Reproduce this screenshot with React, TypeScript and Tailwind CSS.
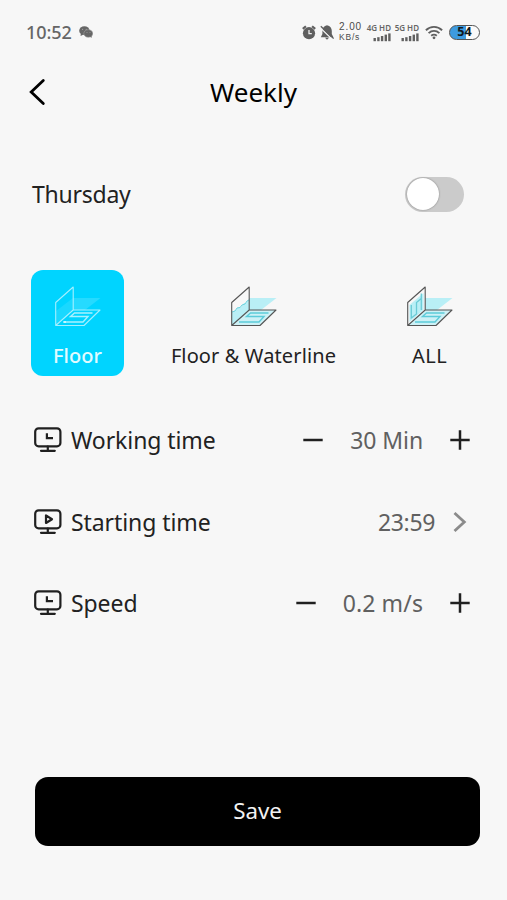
import React, { useState } from "react";

interface PoolIconProps {
  line: string;
  water: string;
  wall?: "waterline" | "full";
  active?: boolean;
}

const PoolIcon: React.FC<PoolIconProps> = ({ line, water, wall, active }) => {
  return (
    <svg width="48" height="42" viewBox="0 0 48 42" fill="none">
      <path
        d="M19 13H46.5L31 25H19Z"
        fill={water}
        opacity={active ? 0.15 : 0.6}
      />
      {active && <path d="M2 26L19 13V25L2 40Z" fill={water} opacity="0.1" />}
      {!active && <path d="M19 25H46L30 40.5H2Z" fill={water} opacity="0.4" />}
      {wall && (
        <path
          d={
            wall === "full"
              ? "M3.5 20L17.5 8V25L3.5 37Z"
              : "M2 27L6 25L8 22L11 22L14 18L16 18L19 14V25L2 40Z"
          }
          fill={water}
          opacity="0.6"
        />
      )}
      {wall === "waterline" && (
        <path
          d="M2 27L5 26L7 23L10 22.5L12 20L15 19L17 16L19 15"
          stroke="#6fd3de"
          strokeWidth="1"
        />
      )}
      {wall === "full" && (
        <path
          d="M5.3 20V33L10.5 29V17.5L15.3 13.5V25M15.3 8.5V13.5"
          stroke="#6acbd6"
          strokeWidth="1.3"
        />
      )}
      <path
        d="M38.5 28H20.5L16.5 31.5H34L29 37H9"
        stroke={active ? "#a9f1ff" : "#5ccbd9"}
        strokeWidth="1.4"
      />
      {active && <circle cx="11" cy="37" r="1.1" fill="#d8faff" />}
      <path
        d="M1.7 17.5L19.2 2V25L1.7 40.5ZM19.2 25H46L30 40.5H1.7"
        stroke={line}
        strokeWidth="1.1"
        strokeLinejoin="round"
      />
    </svg>
  );
};

const MonitorIcon: React.FC<{ play?: boolean }> = ({ play }) => {
  return (
    <svg
      width="29"
      height="26"
      viewBox="0 0 29 26"
      fill="none"
      stroke="#202020"
      strokeWidth="2.2"
      strokeLinecap="round"
      strokeLinejoin="round"
    >
      <rect x="2.2" y="1.3" width="25.2" height="18" rx="3.4" />
      <path d="M14.8 19.5V23.8M8 23.8H21.8" />
      {play ? (
        <path d="M13 6.4V14L19 10.2Z" />
      ) : (
        <path d="M13.9 6.2V11.2H20" strokeLinecap="butt" strokeLinejoin="miter" />
      )}
    </svg>
  );
};

const MinusIcon = () => (
  <svg width="20" height="20" viewBox="0 0 20 20" stroke="#202020" strokeWidth="2.5">
    <path d="M0.3 10H19.7" />
  </svg>
);

const PlusIcon = () => (
  <svg width="20" height="20" viewBox="0 0 20 20" stroke="#202020" strokeWidth="2.5">
    <path d="M0.3 10H19.7M10 0.3V19.7" />
  </svg>
);

const Signal: React.FC<{ label: string }> = ({ label }) => (
  <div className="flex w-[24px] flex-col items-end">
    <span className="whitespace-nowrap text-[8px] leading-[9px] font-semibold">
      {label}
    </span>
    <svg width="18" height="9" viewBox="0 0 18 9" fill="#606060" className="mt-[1px]">
      <rect x="0.5" y="5" width="2.4" height="3.2" />
      <rect x="4.2" y="4.2" width="2.4" height="4" />
      <rect x="7.9" y="3" width="2.4" height="5.2" />
      <rect x="11.6" y="1.6" width="2.4" height="6.6" />
      <rect x="15.2" y="0.4" width="2.4" height="7.8" />
    </svg>
  </div>
);

const StatusBar = () => (
  <div className="flex h-[64px] items-center pr-[27px] pl-[26px] text-[#666666]">
    <span className="text-[18px] leading-6 font-medium tracking-[-0.1px]">10:52</span>
    <svg width="14" height="12" viewBox="0 0 14 12" className="ml-[7px]">
      <ellipse cx="5.4" cy="4.7" rx="5.2" ry="4.4" fill="#666666" />
      <path d="M1.8 7.5L1.6 10L4.5 8.5Z" fill="#666666" />
      <ellipse cx="9.3" cy="7.5" rx="4.5" ry="3.8" fill="#666666" stroke="#a0a0a0" strokeWidth="0.6" />
      <path d="M11 10.5L12.6 11.9L12.5 9.5Z" fill="#666666" />
      <circle cx="3.6" cy="3.3" r="0.6" fill="#a9a9a9" />
      <circle cx="7.2" cy="3.3" r="0.6" fill="#a9a9a9" />
      <circle cx="8" cy="6.6" r="0.5" fill="#a0a0a0" />
      <circle cx="11" cy="6.6" r="0.5" fill="#a0a0a0" />
    </svg>
    <div className="ml-auto flex items-center">
      <svg width="14" height="15" viewBox="0 0 14 15" fill="none">
        <circle cx="7" cy="8.2" r="6.1" fill="#606060" />
        <path d="M0.8 3.9L3.9 1.2M13.2 3.9L10.1 1.2" stroke="#606060" strokeWidth="2.1" />
        <path d="M7 5V8.6H9.8" stroke="#f0f0f0" strokeWidth="1.3" />
      </svg>
      <svg width="14" height="15" viewBox="0 0 14 15" fill="none" className="ml-[4px]">
        <path
          d="M7 0.3C10.2 0.9 11.8 3 11.8 6V9L13.4 12.2H0.8L2.4 9V6C2.4 3 4 0.9 7 0.3ZM5 12.8H9L7 14.8Z"
          fill="#606060"
        />
        <path d="M0.5 3L12.5 14.6" stroke="#f7f7f7" strokeWidth="1.2" />
        <path d="M0.8 1.2L13.6 13.6" stroke="#606060" strokeWidth="1.3" />
      </svg>
      <div className="ml-[5px] flex w-[24px] flex-col font-['Liberation_Sans',sans-serif] whitespace-nowrap text-[#4a4a4a]">
        <span className="h-[10px] text-[10px] leading-[10px] tracking-[0.9px]">2.00</span>
        <span className="h-[10px] text-[8.5px] leading-[10px] tracking-[0.8px]">KB/s</span>
      </div>
      <div className="ml-[4px] flex gap-[4px]">
        <Signal label="4G HD" />
        <Signal label="5G HD" />
      </div>
      <svg width="18" height="15" viewBox="0 0 18 15" fill="none" stroke="#606060" className="ml-[6px]">
        <path d="M0.9 5.2C5.5 0.8 12.5 0.8 17.1 5.2" strokeWidth="1.9" />
        <path d="M3.6 8.1C6.8 5.2 11.2 5.2 14.4 8.1" strokeWidth="1.9" />
        <path d="M6.2 10.8C8 9.3 10 9.3 11.8 10.8" strokeWidth="1.9" />
        <circle cx="9" cy="12.8" r="1.4" fill="#606060" stroke="none" />
      </svg>
      <div className="ml-[6px] flex h-[15px] w-[31px] items-center justify-center rounded-full border-[1.5px] border-[#555555] bg-[linear-gradient(90deg,#3d9be0_54%,#fafafa_54%)]">
        <span className="text-[12.5px] leading-[12px] font-bold text-[#101820]">54</span>
      </div>
    </div>
  </div>
);

interface RowProps {
  label: string;
  play?: boolean;
  children: React.ReactNode;
}

const SettingRow: React.FC<RowProps> = ({ label, play, children }) => (
  <div className="flex h-[81.5px] items-center pr-[37px] pl-[33px]">
    <MonitorIcon play={play} />
    <span className="ml-[9px] text-[23px] leading-8 tracking-[-0.08px] text-[#222222]">
      {label}
    </span>
    <div className="ml-auto flex items-center text-[23px] leading-8 tracking-[-0.1px] text-[#606060]">
      {children}
    </div>
  </div>
);

const App: React.FC = () => {
  const [enabled, setEnabled] = useState(false);

  return (
    <div className="h-[900px] w-full overflow-hidden bg-[#f7f7f7] font-['Noto_Sans',sans-serif]">
      <StatusBar />

      <div className="grid h-[56px] grid-cols-[1fr_auto_1fr] items-center">
        <button className="ml-[29px] w-[18px]">
          <svg width="18" height="28" viewBox="0 0 18 28" fill="none" stroke="#000" strokeWidth="2.8">
            <path d="M14.3 2.5L2.2 14L14.3 25.5" strokeLinecap="round" />
          </svg>
        </button>
        <h1 className="text-[26px] leading-8 text-black">Weekly</h1>
      </div>

      <div className="mt-[39px] flex h-[70px] items-center justify-between pr-[43px] pl-[32px]">
        <span className="text-[23px] leading-8 tracking-[-0.25px] text-[#222222]">
          Thursday
        </span>
        <button
          onClick={() => setEnabled(!enabled)}
          className={`flex h-[35px] w-[59px] items-center rounded-full p-[1.5px] ${
            enabled ? "justify-end bg-[#00d4ff]" : "bg-[#cbcbcb]"
          }`}
        >
          <span className="size-[32px] rounded-full bg-white shadow-[0_0_2px_rgba(0,0,0,0.4)]" />
        </button>
      </div>

      <div className="mt-[41px] ml-[31px] flex h-[106px] gap-[41.5px] text-[20px] leading-[28px] text-[#222222]">
        <div className="flex w-[93px] flex-col items-center rounded-[12px] bg-[#00d4ff] pt-[15px] text-[#e2fbff]">
          <PoolIcon line="#a5efff" water="#ffffff" active />
          <span className="mt-[15px] font-medium">Floor</span>
        </div>
        <div className="flex w-[176px] flex-col items-center pt-[15px]">
          <PoolIcon line="#555555" water="#8fe9f5" wall="waterline" />
          <span className="mt-[15px] tracking-[0.12px] whitespace-nowrap">
            Floor &amp; Waterline
          </span>
        </div>
        <div className="flex w-[93px] flex-col items-center pt-[15px]">
          <PoolIcon line="#555555" water="#8fe9f5" wall="full" />
          <span className="mt-[15px] tracking-[0.5px]">ALL</span>
        </div>
      </div>

      <div className="mt-[23.5px]">
        <SettingRow label="Working time">
          <MinusIcon />
          <span className="mx-[27px]">30 Min</span>
          <PlusIcon />
        </SettingRow>
        <SettingRow label="Starting time" play>
          <span className="tracking-[-0.35px]">23:59</span>
          <svg width="16" height="22" viewBox="0 0 16 22" fill="none" className="mr-[2px] ml-[17px]">
            <path d="M2.5 2L12.3 11L2.5 20" stroke="#8b8b8b" strokeWidth="2.8" />
          </svg>
        </SettingRow>
        <SettingRow label="Speed">
          <MinusIcon />
          <span className="mx-[27px] tracking-[0.1px]">0.2 m/s</span>
          <PlusIcon />
        </SettingRow>
      </div>

      <button className="mt-[132.5px] ml-[35px] h-[69px] w-[445px] rounded-[13px] bg-black text-[22.3px] leading-8 text-[#f2f2f2]">
        Save
      </button>
    </div>
  );
};

export default App;
